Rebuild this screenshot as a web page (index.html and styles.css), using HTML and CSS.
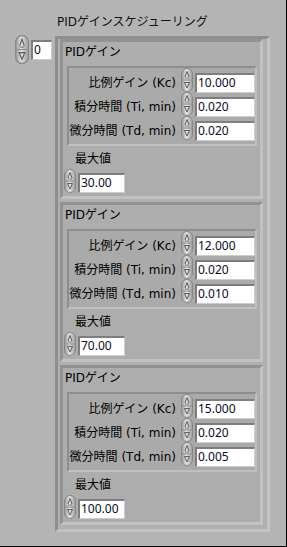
FILE: index.html
```html
<!DOCTYPE html>
<html lang="ja">
<head>
    <meta charset="UTF-8">
    <meta name="viewport" content="width=device-width, initial-scale=1.0">
    <title>PIDゲインスケジューリング</title>
    <link rel="stylesheet" href="styles.css">
</head>
<body>
    <div class="panel">
        <div class="title">PIDゲインスケジューリング</div>
        <div class="main">
            <div class="index">
                <svg class="spin spin-lg"><use href="#spinner"/></svg>
                <div class="num num-index">0</div>
            </div>
            <div class="array">
                <div class="cluster">
                    <div class="cluster-title">PIDゲイン</div>
                    <div class="gains">
                        <div class="row"><span class="label">比例ゲイン (Kc)</span><svg class="spin"><use href="#spinner"/></svg><div class="num">10.000</div></div>
                        <div class="row"><span class="label">積分時間 (Ti, min)</span><svg class="spin"><use href="#spinner"/></svg><div class="num">0.020</div></div>
                        <div class="row"><span class="label">微分時間 (Td, min)</span><svg class="spin"><use href="#spinner"/></svg><div class="num">0.020</div></div>
                    </div>
                    <div class="max-label">最大値</div>
                    <div class="max-row"><svg class="spin"><use href="#spinner"/></svg><div class="num num-max">30.00</div></div>
                </div>
                <div class="cluster">
                    <div class="cluster-title">PIDゲイン</div>
                    <div class="gains">
                        <div class="row"><span class="label">比例ゲイン (Kc)</span><svg class="spin"><use href="#spinner"/></svg><div class="num">12.000</div></div>
                        <div class="row"><span class="label">積分時間 (Ti, min)</span><svg class="spin"><use href="#spinner"/></svg><div class="num">0.020</div></div>
                        <div class="row"><span class="label">微分時間 (Td, min)</span><svg class="spin"><use href="#spinner"/></svg><div class="num">0.010</div></div>
                    </div>
                    <div class="max-label">最大値</div>
                    <div class="max-row"><svg class="spin"><use href="#spinner"/></svg><div class="num num-max">70.00</div></div>
                </div>
                <div class="cluster">
                    <div class="cluster-title">PIDゲイン</div>
                    <div class="gains">
                        <div class="row"><span class="label">比例ゲイン (Kc)</span><svg class="spin"><use href="#spinner"/></svg><div class="num">15.000</div></div>
                        <div class="row"><span class="label">積分時間 (Ti, min)</span><svg class="spin"><use href="#spinner"/></svg><div class="num">0.020</div></div>
                        <div class="row"><span class="label">微分時間 (Td, min)</span><svg class="spin"><use href="#spinner"/></svg><div class="num">0.005</div></div>
                    </div>
                    <div class="max-label">最大値</div>
                    <div class="max-row"><svg class="spin"><use href="#spinner"/></svg><div class="num num-max">100.00</div></div>
                </div>
            </div>
        </div>
    </div>

    <!-- spinner used by every numeric control -->
    <svg class="defs" width="0" height="0">
        <defs>
            <linearGradient id="spinFill" x1="0" y1="0" x2="1" y2="0">
                <stop offset="0" stop-color="#949494"/>
                <stop offset="0.45" stop-color="#e4e4e4"/>
                <stop offset="1" stop-color="#9c9c9c"/>
            </linearGradient>
            <symbol id="spinner" viewBox="0 0 12 24" preserveAspectRatio="none">
                <rect x="0.5" y="0.5" width="11" height="23" rx="5.5" fill="url(#spinFill)" stroke="#878787"/>
                <line x1="1.5" y1="12" x2="10.5" y2="12" stroke="#8a8a8a"/>
                <path d="M4 9 L6 3.5 L8 9" fill="none" stroke="#5e5e5e"/>
                <line x1="4" y1="10" x2="8" y2="10" stroke="#7a7a7a"/>
                <path d="M3.5 14.5 L8.5 14.5 L6 20 Z" fill="none" stroke="#5e5e5e"/>
            </symbol>
        </defs>
    </svg>
</body>
</html>
```

FILE: styles.css
```css
* {
    box-sizing: border-box;
}
body {
    margin: 0;
    background-color: #b4b4b4;
    font-family: "DejaVu Sans", "Noto Sans CJK JP", sans-serif;
    font-size: 12px;
    color: #000;
    overflow: hidden;
}
.panel {
    width: 287px;
    height: 547px;
    padding-top: 15px;
    border-right: 1px solid #000;
    border-bottom: 1px solid #000;
    overflow: hidden;
}
.title {
    padding-left: 57px;
    height: 14px;
    line-height: 14px;
    color: #111;
}
.main {
    display: flex;
    align-items: flex-start;
    margin-top: 6px;
    padding-left: 15px;
}
.index {
    display: flex;
    align-items: center;
    gap: 2px;
    height: 29px;
}
.spin {
    display: block;
    flex: none;
    width: 12px;
    height: 24px;
}
.spin-lg {
    width: 14px;
    height: 29px;
}
.num {
    flex: none;
    width: 60px;
    height: 20px;
    padding-left: 1px;
    background: #fff;
    border-style: solid;
    border-width: 2px 1px 1px 2px;
    border-color: #7e7e7e #cdcdcd #cdcdcd #7e7e7e;
    font-family: "Noto Sans", sans-serif;
    line-height: 16px;
    color: #0a0a28;
}
.num-index {
    width: 21px;
}
.num-max {
    width: 47px;
}

/* array of clusters */
.array {
    margin-left: 3px;
    margin-top: 1px;
    width: 215px;
    display: flex;
    flex-direction: column;
    gap: 3px;
    padding: 0 4px 4px 2px;
    border-style: solid;
    border-width: 3px;
    border-color: #8e8e8e #c3c3c3 #c3c3c3 #8e8e8e;
    background: #b0b0b0;
}
.cluster {
    height: 160px;
    border-style: solid;
    border-width: 3px;
    border-color: #929292 #c2c2c2 #c2c2c2 #929292;
    background: #adadad;
}
.cluster-title {
    margin-top: 2px;
    padding-left: 2px;
    height: 16px;
    line-height: 16px;
}
.gains {
    margin: 6px 3px 0 4px;
    height: 80px;
    padding-bottom: 4px;
    border-style: solid;
    border-width: 2px;
    border-color: #8e8e8e #c0c0c0 #c0c0c0 #8e8e8e;
    background: #aaaaaa;
}
.row {
    display: flex;
    align-items: flex-start;
    height: 24px;
}
.label {
    flex: 1;
    padding-right: 5px;
    text-align: right;
    white-space: nowrap;
    margin-top: 5px;
    line-height: 20px;
}
.row .num {
    margin-left: 2px;
    margin-top: 5px;
}
.max-label {
    margin-top: 6px;
    padding-left: 12px;
    height: 14px;
    line-height: 14px;
}
.max-row {
    display: flex;
    align-items: flex-start;
    margin-top: 3px;
    padding-left: 1px;
}
.max-row .num {
    margin-left: 2px;
    margin-top: 4px;
}
.defs {
    position: absolute;
    width: 0;
    height: 0;
}
```
